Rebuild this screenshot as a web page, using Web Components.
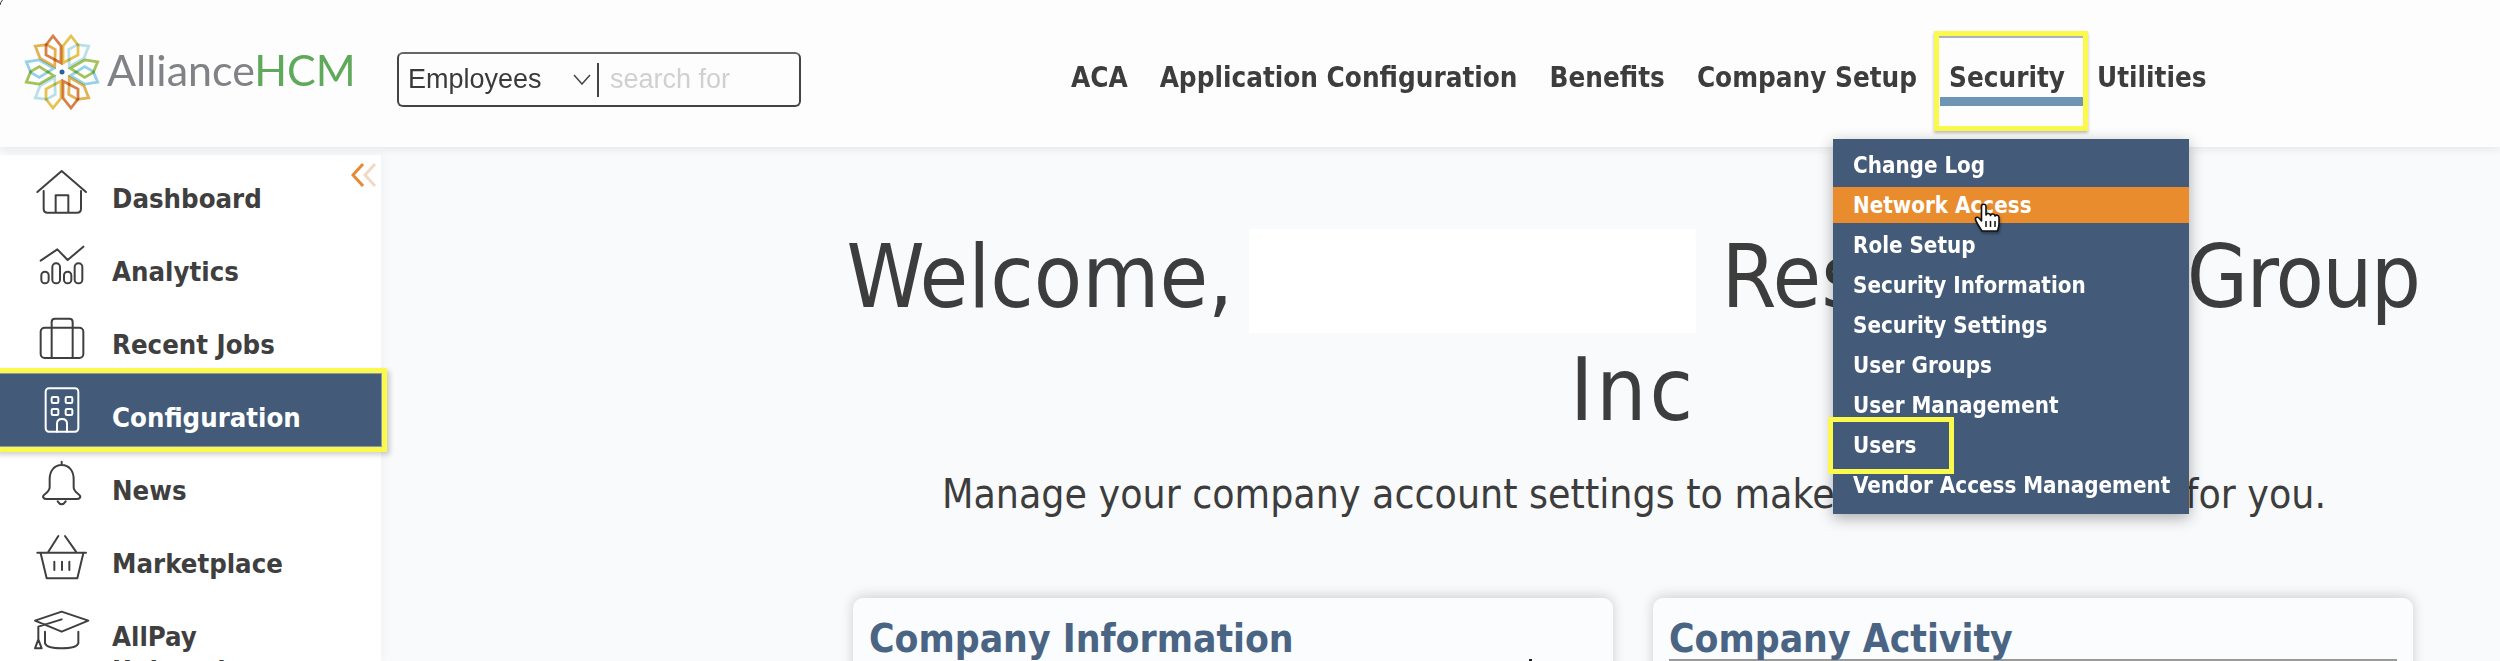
<!DOCTYPE html>
<html lang="en"><head><meta charset="utf-8"><title>AllianceHCM</title>
<style>
html,body{margin:0;height:661px;overflow:hidden;background:#f9fafc}
body{font-family:"DejaVu Sans",sans-serif;font-stretch:condensed;color:#3d3d3d}
</style></head><body>
<app-shell>
  <app-header slot="header">
    <brand-logo slot="logo"></brand-logo>
    <search-box slot="search"></search-box>
    <top-nav slot="nav">
      <nav-link>ACA</nav-link>
      <nav-link>Application Configuration</nav-link>
      <nav-link>Benefits</nav-link>
      <nav-link>Company Setup</nav-link>
      <nav-link current>Security
        <drop-menu slot="menu">
          <menu-row>Change Log</menu-row>
          <menu-row hover>Network Access<hand-cursor slot="cursor"></hand-cursor></menu-row>
          <menu-row>Role Setup</menu-row>
          <menu-row>Security Information</menu-row>
          <menu-row>Security Settings</menu-row>
          <menu-row>User Groups</menu-row>
          <menu-row>User Management</menu-row>
          <menu-row marked>Users</menu-row>
          <menu-row>Vendor Access Management</menu-row>
        </drop-menu>
      </nav-link>
      <nav-link>Utilities</nav-link>
    </top-nav>
  </app-header>
  <side-bar slot="side">
    <side-item>
      <svg slot="icon" viewBox="0 0 150 150"><path d="M1 75 74 12 147 75M20 72V125Q20 137 32 137H120Q132 137 132 125V72M56 137V85H94V137"/></svg>
      Dashboard</side-item>
    <side-item>
      <svg slot="icon" viewBox="0 0 150 150"><path d="M11 62 61 28 92 60 139 20"/><rect x="13" y="95" width="22" height="35" rx="11"/><rect x="46" y="70" width="23" height="60" rx="11"/><rect x="81" y="95" width="22" height="35" rx="11"/><rect x="113" y="70" width="23" height="60" rx="11"/></svg>
      Analytics</side-item>
    <side-item>
      <svg slot="icon" viewBox="0 0 150 150"><rect x="11" y="44" width="128" height="91" rx="12"/><path d="M44 44V27Q44 17 54 17H97Q107 17 107 27V44M44 44V135M107 44V135"/></svg>
      Recent Jobs</side-item>
    <side-item active>
      <svg slot="icon" viewBox="0 0 150 150"><rect x="26" y="10" width="98" height="130" rx="10"/><rect x="44" y="36" width="20" height="18" rx="4"/><rect x="86" y="36" width="20" height="18" rx="4"/><rect x="44" y="72" width="20" height="18" rx="4"/><rect x="86" y="72" width="20" height="18" rx="4"/><path d="M60 140V116Q60 102 75 102T90 116V140"/></svg>
      Configuration</side-item>
    <side-item>
      <svg slot="icon" viewBox="0 0 150 150"><path d="M74 8V18C50 18 38 38 38 60V85C38 100 20 105 18 112Q18 120 28 120H120Q130 120 130 112C128 105 110 100 110 85V60C110 38 98 18 74 18M62 127Q74 145 86 127"/></svg>
      News</side-item>
    <side-item>
      <svg slot="icon" viewBox="0 0 150 150"><path d="M1 62H147M34 59 64 12M84 12 117 59M11 64 29 139H121L139 64M52 89V114M75 89V114M97 89V114"/></svg>
      Marketplace</side-item>
    <side-item>
      <svg slot="icon" viewBox="0 0 150 150"><path d="M-6 47 74 20 154 47 74 80ZM24 80V115Q30 130 74 130T124 115V80M74 43 4 65V105M-6 130 4 103 14 130Z"/></svg>
      AllPay University</side-item>
  </side-bar>
  <welcome-panel slot="main">
    <info-card slot="cards" title="Company Information" tick></info-card>
    <info-card slot="cards" title="Company Activity" rule></info-card>
  </welcome-panel>
</app-shell>
<script>
function def(name, html, extra){
  class C extends HTMLElement{
    constructor(){super();this.attachShadow({mode:'open'}).innerHTML=html;}
    connectedCallback(){if(extra)extra(this);}
  }
  customElements.define(name,C);
}
const font='font-family:"DejaVu Sans",sans-serif;font-stretch:condensed;';

def('app-shell',`<style>
:host{display:block;width:2500px;height:661px;position:relative;overflow:hidden;background:#f9fafc}
.top{position:relative;z-index:5}
.row{display:flex;margin-top:8px;height:506px;align-items:flex-start}
.corner{position:absolute;left:0;top:0;z-index:9}
</style>
<div class="top"><slot name="header"></slot></div>
<div class="row"><slot name="side"></slot><slot name="main"></slot></div>
<svg class="corner" width="8" height="8" viewBox="0 0 8 8" aria-hidden="true"><path d="M0 5Q.5 2 2.500 0" fill="none" stroke="#333" stroke-width="1"/></svg>`);

def('app-header',`<style>
:host{display:flex;height:147px;background:#fdfdfe;box-shadow:0 3px 8px rgba(0,0,0,.07);align-items:flex-start}
.logo{margin:36px 0 0 25px;width:372px;flex:none}
.search{margin-top:52px;flex:none;width:404px}
.nav{margin:59px 0 0 270px}
</style>
<div class="logo"><slot name="logo"></slot></div>
<div class="search"><slot name="search"></slot></div>
<div class="nav"><slot name="nav"></slot></div>`);

const petalColors=['#d9824a','#e8c450','#b9e2ec','#a6c457','#96d3e8','#e5b34f','#d9824a','#e8c450','#b9e2ec','#a6c457','#96d3e8','#e5b34f'];
let petals='';
petalColors.forEach((c,i)=>{petals+=`<path transform="rotate(${60*Math.floor(i/2)}) scale(${i%2?-1:1} 1)" d="M-1 -9 -1 -26 -9 -36 -16 -27 -16 -17Z" stroke="${c}"/>`;});
def('brand-logo',`<style>
:host{display:flex;align-items:flex-start;gap:8px}
svg{width:74px;height:72px;flex:none;overflow:visible;margin-top:0}
path{fill:none;stroke-width:2.800;mix-blend-mode:multiply}
.t{font:43px/1 Lato,sans-serif;color:#808285;margin-top:12px;white-space:nowrap;letter-spacing:0}
.t b{font-weight:400;color:#5fa95b}
</style>
<svg viewBox="-37 -36 74 72" aria-hidden="true">${petals}<circle r="2.500" fill="#27639b"/></svg>
<div class="t">Alliance<b>HCM</b></div>`);

def('search-box',`<style>
:host{display:flex;box-sizing:border-box;width:404px;height:55px;border:2px solid #444;border-top-color:#666;border-radius:6px;align-items:center;font:27px "Liberation Sans",sans-serif;background:#fdfdfe;position:relative}
.v{margin-left:9px;color:#3a3a3a;width:165px}
svg{width:18px;height:11px;flex:none}
.d{width:2px;height:34px;background:#444;margin:0 11px 0 6px;flex:none}
.p{color:#d0d0d0}
</style>
<span class="v">Employees</span>
<svg viewBox="0 0 18 11" aria-hidden="true"><path d="M1 1 9 10 17 1" fill="none" stroke="#444" stroke-width="1.500"/></svg>
<span class="d"></span><span class="p">search for</span>`);

def('top-nav',`<style>:host{display:flex;gap:32px;align-items:flex-start}</style><slot></slot>`);

def('nav-link',`<style>
:host{display:block;position:relative;height:36px;${font}font-weight:700;font-size:27.6px;line-height:38px;white-space:nowrap;color:#3d3d3d}
:host([current]) .bar{position:absolute;left:-9px;top:38px;width:143px;height:9px;background:#6f95b4}
:host([current]) .box{position:absolute;left:-15px;top:-28px;width:154px;height:100px;box-sizing:border-box;border:5px solid #fbf94b;box-shadow:inset 0 2px 0 #aab2bd,0 2px 3px rgba(0,0,0,.25)}
</style><span class="box"></span><span class="bar"></span><slot></slot><slot name="menu"></slot>`);

def('drop-menu',`<style>
:host{display:block;position:absolute;left:-116px;top:80px;width:356px;height:375px;box-sizing:border-box;padding:6px 0 9px;background:#435b78;box-shadow:0 4px 14px rgba(0,0,0,.32);z-index:4}
</style><slot></slot>`);

def('menu-row',`<style>
:host{display:block;position:relative;height:40px;box-sizing:border-box;padding-left:20px;${font}font-weight:700;font-size:22.2px;line-height:40px;color:#fff;white-space:nowrap}
:host([hover]){background:linear-gradient(#435b78 2px,#e98c2e 2px,#e98c2e 38px,#435b78 38px)}
:host([marked]) .box{position:absolute;left:-5px;top:-8px;width:126px;height:57px;box-sizing:border-box;border:5px solid #fbf94b}
.box{display:block}
</style><span class="box"></span><slot></slot><slot name="cursor"></slot>`);

def('hand-cursor',`<style>
:host{display:block;position:absolute;left:141px;top:17px;width:30px;height:32px;filter:drop-shadow(1px 2px 1px rgba(0,0,0,.35))}
svg{display:block;width:100%;height:100%}
</style>
<svg viewBox="0 0 30 32" aria-hidden="true"><path d="M8 29C6 26 2 20 1.500 17.500C1 15 4 14.500 5.500 16.500L7.500 19V4.500C7.500 1.500 12 1.500 12 4.500V13C12.500 11 16 11 16.500 13.500C17 11.500 20.500 11.500 21 14C22 12.500 25 13 25 15.500V22C25 25 24 27 23.500 29Z" fill="#fff" stroke="#111" stroke-width="1.600" stroke-linejoin="round"/><path d="M12 19V25M16.500 19V25M21 19V25" stroke="#111" stroke-width="1.500"/></svg>`);

def('side-bar',`<style>
:host{display:block;position:relative;width:381px;height:506px;background:#fff;box-shadow:3px 0 8px rgba(0,0,0,.03);flex:none}
.c{position:absolute;right:4px;top:8px;width:26px;height:24px}
</style>
<svg class="c" viewBox="0 0 26 24" aria-hidden="true"><path d="M12 1 2 12 12 23" fill="none" stroke="#e58a35" stroke-width="3"/><path d="M24 1 14 12 24 23" fill="none" stroke="#f1d9c4" stroke-width="3"/></svg>
<slot></slot>`);

def('side-item',`<style>
:host{display:flex;position:relative;height:73px;box-sizing:border-box;padding-left:37px;align-items:center;gap:25px;${font}font-weight:700;font-size:27.300px;color:#3f3f3f;overflow:visible}
:host([active]){height:72px;margin-bottom:1px;background:#435b78;color:#fff;box-shadow:0 0 0 1px #8b99aa,0 0 0 6px #fbf94b,3px 3px 5px 6px rgba(0,0,0,.18);z-index:2}
:host([active]) ::slotted(svg){stroke:#fff}
.i{width:50px;height:50px;flex:none;display:block}
::slotted(svg){width:50px;height:50px;display:block;fill:none;stroke:#3f3f3f;stroke-width:6;stroke-linejoin:round;stroke-linecap:round;overflow:visible}
.l{padding-top:12px;width:210px;line-height:34px;align-self:flex-start;margin-top:15px}
</style>
<span class="i"><slot name="icon"></slot></span><span class="l"><slot></slot></span>`);

def('welcome-panel',`<style>
:host{display:block;box-sizing:border-box;width:2119px;padding:65px 85px 0 472px;text-align:center;color:#3d3d3d;${font}}
h1{margin:0 0 0 -20px;font-weight:400;font-size:88px;line-height:113px;width:1600px;white-space:nowrap}
.m{display:inline-block;width:447px;height:104px;margin-left:-9px;background:#fff;vertical-align:-26px}
.w{display:inline-block;width:440px;text-align:left}
.g{letter-spacing:-1.600px}
.n{letter-spacing:3px}
p{margin:23px 0 0;font-size:40.600px;line-height:50px;width:1562px;white-space:nowrap}
.cards{display:flex;gap:40px;margin-top:79px;text-align:left}
</style>
<h1>Welcome, <span class="m"></span> <span class="w">Resource</span> <span class="g">Group</span><br><span class="n">Inc</span></h1>
<p>Manage your company account settings to make AllianceHCM work for you.</p>
<div class="cards"><slot name="cards"></slot></div>`);

def('info-card',`<style>
:host{display:block;box-sizing:border-box;width:760px;height:200px;padding:21px 16px;background:#fbfcfd;border-radius:10px;box-shadow:0 -3px 14px rgba(0,0,0,.11),0 0 12px rgba(0,0,0,.07);${font}}
h2{margin:0;font-size:38.700px;line-height:40px;font-weight:700;color:#4a6484;white-space:nowrap}
.r{height:3px;background:#9a9a9a;margin-top:0}
.k{width:3px;height:3px;background:#222;margin:0 0 0 660px}
</style><h2></h2><div class="x"></div>`, el=>{
  const s=el.shadowRoot;
  s.querySelector('h2').textContent=el.getAttribute('title');
  const x=s.querySelector('.x');
  if(el.hasAttribute('rule'))x.className='r';
  if(el.hasAttribute('tick'))x.className='k';
});
</script>
</body></html>
